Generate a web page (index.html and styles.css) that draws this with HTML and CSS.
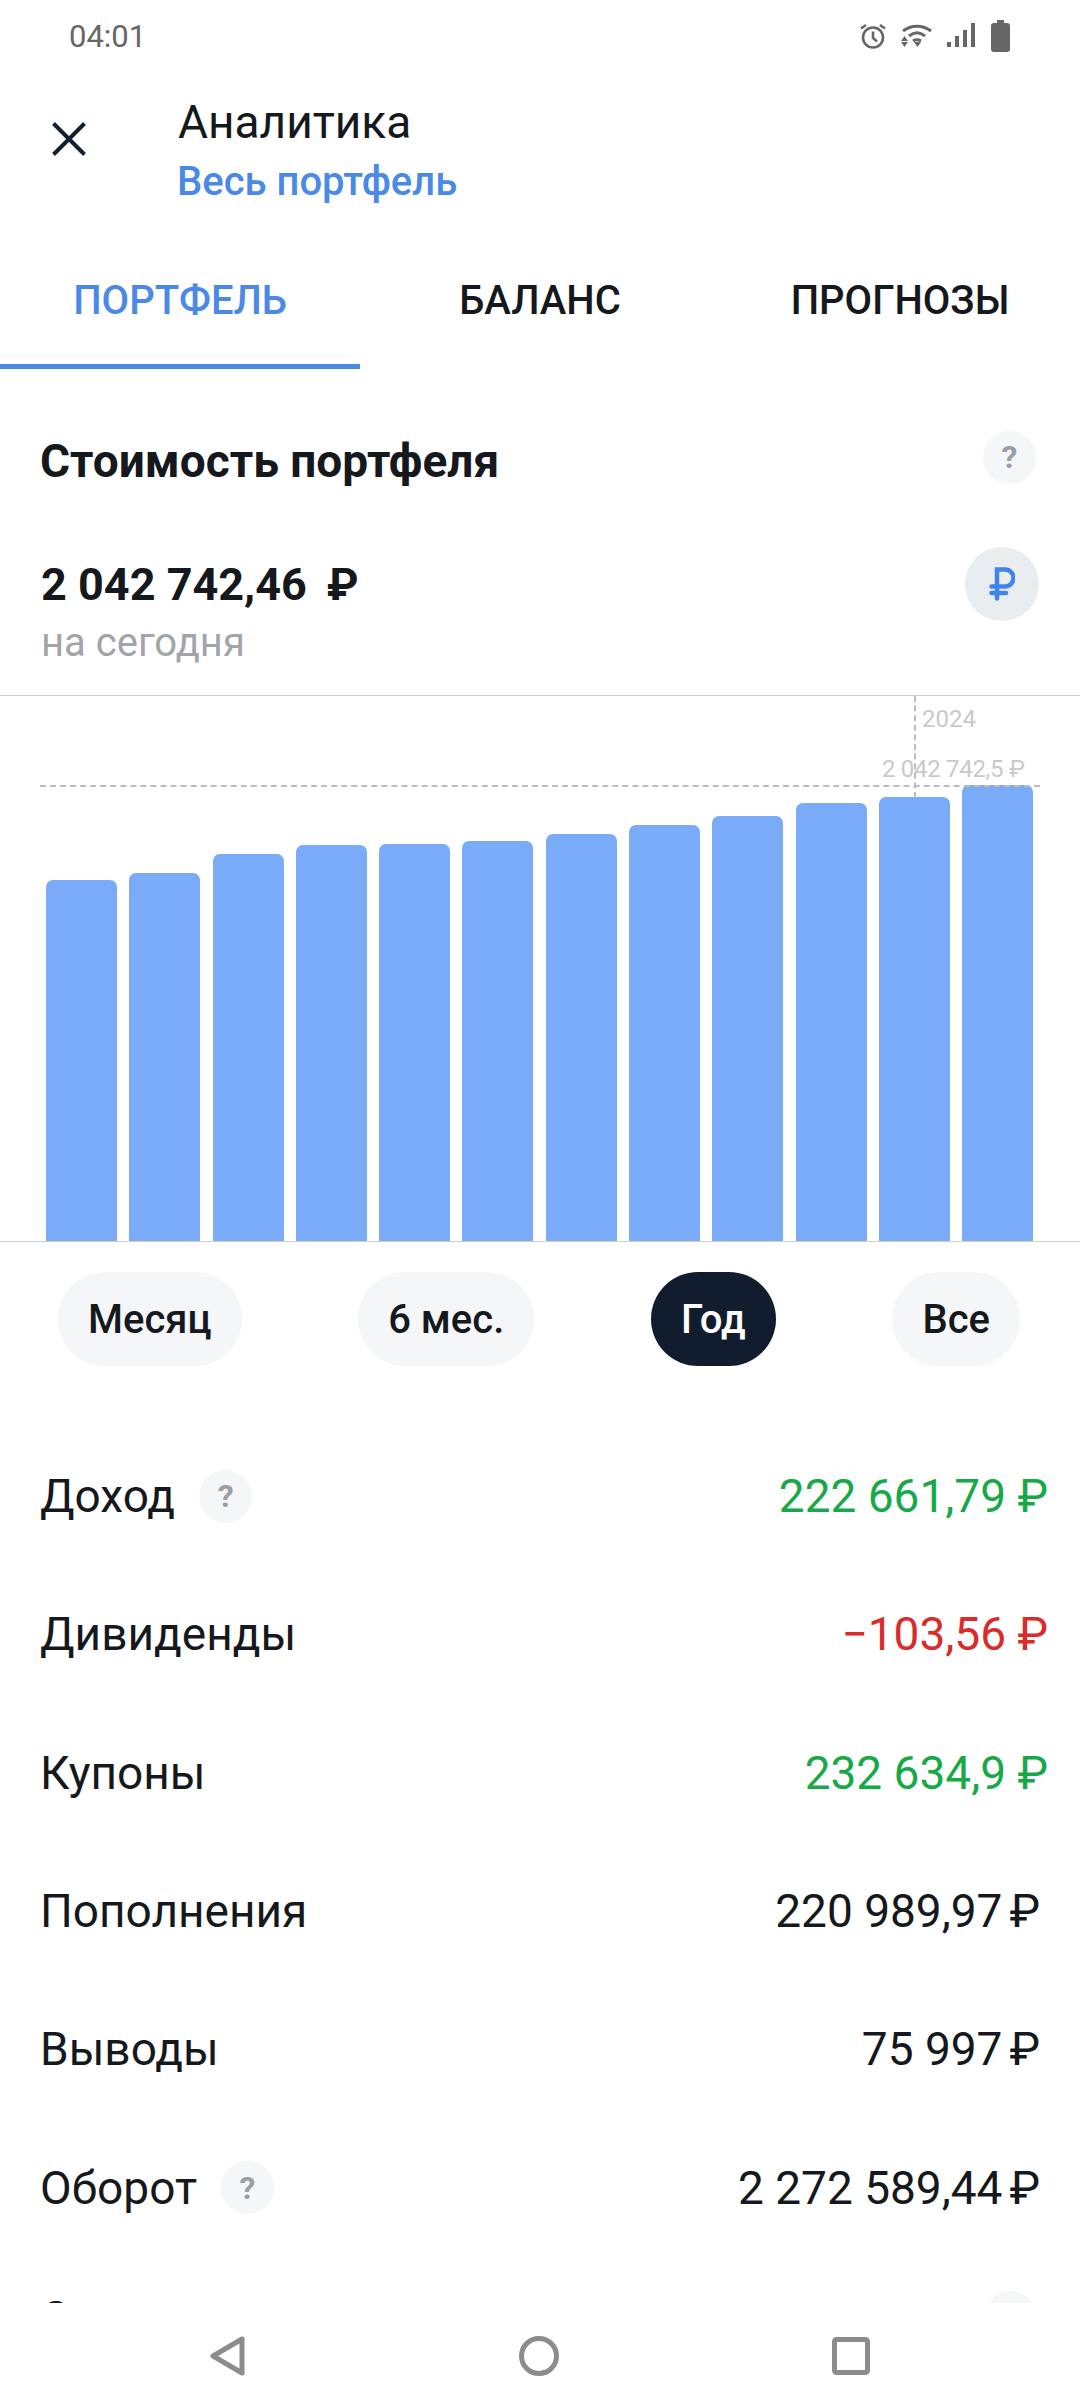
FILE: index.html
```html
<!DOCTYPE html>
<html lang="ru">
<head>
  <meta charset="UTF-8" />
  <meta name="viewport" content="width=device-width, initial-scale=1.0"/>
  <title>Аналитика</title>
  <link rel="stylesheet" href="styles.css">
</head>

<body>
  <div class="phone">
    <div class="statusbar">
      <span class="time">04:01</span>
      <div class="status-icons">
        <svg class="ic-alarm" viewBox="0 0 28 28" fill="none" stroke="#666" stroke-width="2.6">
          <circle cx="14" cy="15.5" r="10"/>
          <path d="M14 9.5v6.5l4 3.5"/>
          <path d="M2 6.5l5-3.5M26 6.5l-5-3.5"/>
        </svg>
        <svg class="ic-wifi" viewBox="0 0 32 28" fill="none" stroke="#666" stroke-width="3">
          <path d="M3 9c8-6.500 20-6.500 28 0"/>
          <path d="M9 14c5-4 11-4 16 0"/>
          <path d="M13 19c2.500-1.500 5.500-1.500 8 0"/>
          <path d="M1 19h7l-3.500-5zM1 20h7l-3.500 5zM14 20h7l-3.500 5z" fill="#666" stroke="none"/>
        </svg>
        <svg class="ic-signal" viewBox="0 0 28 28" fill="#666">
          <rect x="0" y="20" width="4" height="5"/>
          <rect x="8" y="14" width="4" height="11"/>
          <rect x="16" y="8" width="4" height="17"/>
          <rect x="24" y="1" width="4" height="24"/>
        </svg>
        <svg class="ic-battery" viewBox="0 0 19 32" fill="#666">
          <path d="M6 0h7v3h3a3 3 0 0 1 3 3v23a3 3 0 0 1-3 3H3a3 3 0 0 1-3-3V6a3 3 0 0 1 3-3h3z"/>
        </svg>
      </div>
    </div>

    <header class="topbar">
      <svg class="ic-close" viewBox="0 0 34 34" fill="none" stroke="#15202e" stroke-width="4">
        <path d="M1.500 1.500l31 31M32.500 1.500l-31 31"/>
      </svg>
      <div class="topbar-text">
        <h1>Аналитика</h1>
        <a class="subtitle" href="#">Весь портфель</a>
      </div>
    </header>

    <nav class="tabs">
      <a class="tab tab-active" href="#">ПОРТФЕЛЬ</a>
      <a class="tab" href="#">БАЛАНС</a>
      <a class="tab" href="#">ПРОГНОЗЫ</a>
    </nav>

    <main class="content">
      <div class="section-head">
        <h2>Стоимость портфеля</h2>
        <span class="help">?</span>
      </div>

      <div class="total">
        <div>
          <div class="total-sum">2 042 742,46<span class="total-rub">₽</span></div>
          <div class="total-date">на сегодня</div>
        </div>
        <span class="currency">
          <svg viewBox="0 0 26 34" fill="none" stroke="#3f84ea" stroke-width="4.500" stroke-linecap="round">
            <path d="M8 31.500V2.500h8a8.500 8.500 0 0 1 0 17H2.500"/>
            <path d="M2.500 26H17"/>
          </svg>
        </span>
      </div>

      <div class="chart">
        <div class="bars">
          <div class="bar" style="height:361px"></div>
          <div class="bar" style="height:368px"></div>
          <div class="bar" style="height:387px"></div>
          <div class="bar" style="height:396px"></div>
          <div class="bar" style="height:397px"></div>
          <div class="bar" style="height:400px"></div>
          <div class="bar" style="height:407px"></div>
          <div class="bar" style="height:416px"></div>
          <div class="bar" style="height:425px"></div>
          <div class="bar" style="height:438px"></div>
          <div class="bar" style="height:444px"></div>
          <div class="bar" style="height:456px"></div>
        </div>
        <div class="guide-h"></div>
        <div class="guide-v"></div>
        <span class="chart-year">2024</span>
        <span class="chart-value">2 042 742,5 ₽</span>
      </div>

      <div class="periods">
        <button class="pill">Месяц</button>
        <button class="pill">6 мес.</button>
        <button class="pill pill-active">Год</button>
        <button class="pill">Все</button>
      </div>

      <div class="rows">
        <div class="row">
          <div class="row-label">Доход <span class="help">?</span></div>
          <div class="green">222 661,79 ₽</div>
        </div>
        <div class="row">
          <div class="row-label">Дивиденды</div>
          <div class="red">−103,56 ₽</div>
        </div>
        <div class="row">
          <div class="row-label">Купоны</div>
          <div class="green">232 634,9 ₽</div>
        </div>
        <div class="row">
          <div class="row-label">Пополнения</div>
          <div class="val">220 989,97<span class="rub">₽</span></div>
        </div>
        <div class="row">
          <div class="row-label">Выводы</div>
          <div class="val">75 997<span class="rub">₽</span></div>
        </div>
        <div class="row">
          <div class="row-label">Оборот <span class="help">?</span></div>
          <div class="val">2 272 589,44<span class="rub">₽</span></div>
        </div>
        <div class="row row-cut">
          <div class="row-label">Сделки</div>
          <span class="help">?</span>
        </div>
      </div>
    </main>

    <div class="navbar">
      <svg class="ic-back" viewBox="0 0 36 40" fill="none" stroke="#8c8c8c" stroke-width="5" stroke-linejoin="round">
        <path d="M32 3v34L3 20z"/>
      </svg>
      <svg class="ic-home" viewBox="0 0 40 40" fill="none" stroke="#8c8c8c" stroke-width="5">
        <circle cx="20" cy="20" r="17.500"/>
      </svg>
      <svg class="ic-recent" viewBox="0 0 38 38" fill="none" stroke="#8c8c8c" stroke-width="5" stroke-linejoin="round">
        <rect x="2.500" y="2.500" width="33" height="33" rx="2"/>
      </svg>
    </div>
  </div>
</body>
</html>
```

FILE: styles.css
```css
* {
  box-sizing: border-box;
}
body {
  margin: 0;
  font-family: Roboto, "Noto Sans", sans-serif;
  background-color: #fff;
  color: #15181c;
}
.phone {
  width: 1080px;
  height: 2408px;
  display: flex;
  flex-direction: column;
  overflow: hidden;
}

/* status bar */
.statusbar {
  height: 72px;
  flex: none;
  display: flex;
  align-items: center;
  justify-content: space-between;
  padding: 0 70px 0 69px;
}
.time {
  font-size: 31px;
  color: #666;
}
.status-icons {
  display: flex;
  align-items: center;
}
.status-icons svg {
  display: block;
}
.ic-alarm {
  width: 28px;
  height: 28px;
}
.ic-wifi {
  width: 32px;
  height: 28px;
  margin-left: 13px;
}
.ic-signal {
  width: 28px;
  height: 28px;
  margin-left: 15px;
}
.ic-battery {
  width: 19px;
  height: 32px;
  margin-left: 16px;
}

/* header */
.topbar {
  height: 148px;
  flex: none;
  display: flex;
  align-items: flex-start;
  padding-left: 52px;
}
.ic-close {
  width: 34px;
  height: 34px;
  margin-top: 50px;
  flex: none;
}
.topbar-text {
  margin-left: 92px;
}
h1 {
  margin: 0;
  font-size: 46px;
  font-weight: 400;
  line-height: 56px;
  margin-top: 22px;
}
.subtitle {
  display: block;
  font-size: 40px;
  font-weight: 500;
  line-height: 50px;
  margin-left: -1px;
  margin-top: 7px;
  color: #4a8ae6;
  text-decoration: none;
}

/* tabs */
.tabs {
  height: 149px;
  flex: none;
  display: flex;
}
.tab {
  width: 360px;
  height: 149px;
  padding-top: 58px;
  text-align: center;
  font-size: 40px;
  line-height: 46px;
  font-weight: 500;
  color: #15181c;
  text-decoration: none;
}
.tab-active {
  color: #4a8ae6;
  border-bottom: 5px solid #4a8ae6;
}

/* portfolio value */
.content {
  flex: 1;
  min-height: 0;
  overflow: hidden;
}
.section-head {
  height: 122px;
  padding: 62px 44px 0 40px;
  display: flex;
  align-items: center;
  justify-content: space-between;
}
.section-head .help {
  margin-top: -8px;
}
h2 {
  margin: 0;
  font-size: 46px;
  font-weight: 700;
}
.help {
  display: inline-flex;
  align-items: center;
  justify-content: center;
  width: 53px;
  height: 53px;
  border-radius: 50%;
  background-color: #f5f6f8;
  color: #9a9ea8;
  font-size: 32px;
  font-weight: 700;
}
.total {
  display: flex;
  justify-content: space-between;
  align-items: center;
  padding: 0 41px 0 41px;
  margin-top: 69px;
}
.total-sum {
  font-size: 45px;
  font-weight: 700;
  line-height: 50px;
}
.total-rub {
  margin-left: 20px;
}
.total-date {
  font-size: 40px;
  line-height: 44px;
  margin-top: 11px;
  color: #a1a5a9;
}
.currency {
  width: 74px;
  height: 74px;
  border-radius: 50%;
  background-color: #e9edf0;
  display: flex;
  align-items: center;
  justify-content: center;
  margin-top: -57px;
}
.currency svg {
  width: 26px;
  height: 34px;
}

/* chart */
.chart {
  position: relative;
  height: 547px;
  margin-top: 30px;
  border-top: 1px solid #cfcfcf;
  border-bottom: 1px solid #cfcfcf;
}
.bars {
  display: flex;
  align-items: flex-end;
  gap: 12.300px;
  height: 100%;
  padding-left: 46px;
}
.bar {
  width: 71px;
  background-color: #7aabf9;
  border-radius: 7px 7px 0 0;
}
.guide-h {
  position: absolute;
  left: 40px;
  width: 1000px;
  top: 89px;
  border-top: 2px dashed #bdbdbd;
}
.guide-v {
  position: absolute;
  left: 914px;
  top: 0;
  height: 102px;
  border-left: 2px dashed #bdbdbd;
}
.chart-year,
.chart-value {
  position: absolute;
  font-size: 24px;
  line-height: 28px;
  color: #c9c9c9;
}
.chart-year {
  left: 922px;
  top: 9px;
}
.chart-value {
  left: 882px;
  top: 59px;
  letter-spacing: -0.3px;
}

/* period switch */
.periods {
  display: flex;
  justify-content: space-between;
  padding: 30px 60px 0 58px;
}
.pill {
  height: 94px;
  padding: 0 30px;
  border: none;
  border-radius: 47px;
  background-color: #f4f6f8;
  font-family: inherit;
  font-size: 40px;
  font-weight: 500;
  color: #15181c;
}
.pill-active {
  background-color: #111d2e;
  color: #fff;
}

/* list */
.rows {
  padding: 61px 32px 0 40px;
}
.row {
  height: 138.300px;
  display: flex;
  align-items: center;
  justify-content: space-between;
  font-size: 46px;
}
.row-label {
  display: flex;
  align-items: center;
  gap: 24px;
}
.val {
  margin-right: 8px;
}
.rub {
  margin-left: 7px;
}
.green {
  color: #17a948;
}
.red {
  color: #da2b2b;
}
.row-cut {
  margin-top: -8px;
}
.row-cut .help {
  margin-right: 11px;
}

/* system nav */
.navbar {
  height: 105px;
  flex: none;
  display: flex;
  align-items: center;
  background-color: #fff;
  padding-left: 210px;
}
.ic-back {
  width: 36px;
  height: 40px;
}
.ic-home {
  width: 40px;
  height: 40px;
  margin-left: 273px;
}
.ic-recent {
  width: 38px;
  height: 38px;
  margin-left: 273px;
}
```
